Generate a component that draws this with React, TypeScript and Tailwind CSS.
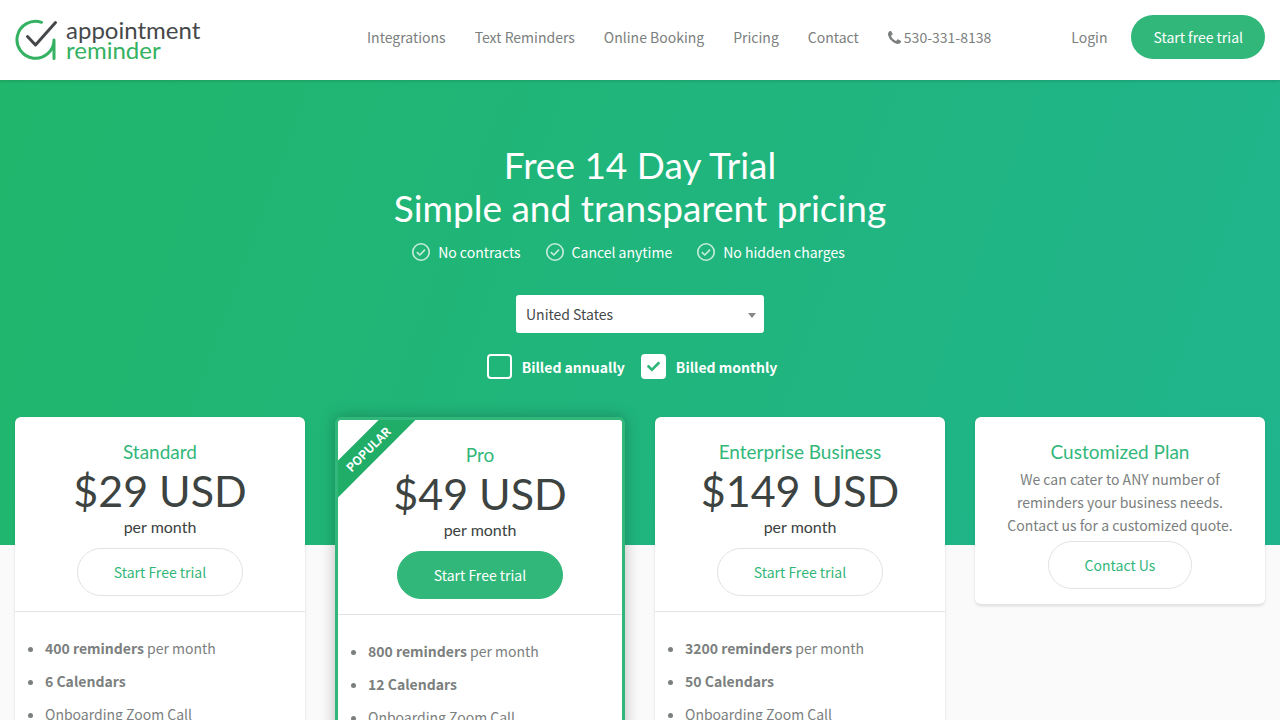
import { FaCheck } from 'react-icons/fa'

const navLinks = ['Integrations', 'Text Reminders', 'Online Booking', 'Pricing', 'Contact']
const benefits = ['No contracts', 'Cancel anytime', 'No hidden charges']

const plans = [
  { name: 'Standard', price: '$29 USD', reminders: '400 reminders', calendars: '6 Calendars', popular: false },
  { name: 'Pro', price: '$49 USD', reminders: '800 reminders', calendars: '12 Calendars', popular: true },
  { name: 'Enterprise Business', price: '$149 USD', reminders: '3200 reminders', calendars: '50 Calendars', popular: false },
]

type Plan = (typeof plans)[number]

function Logo() {
  return (
    <a href="#" className="flex items-center gap-2">
      <svg width="43" height="42" viewBox="0 0 43 42" fill="none" strokeWidth="3" strokeLinecap="round" strokeLinejoin="round">
        <path d="M26.500 3.300A18.500 18.500 0 1 0 39 21v18.500" stroke="#34b262" />
        <path d="M12.500 17.500l8 8.500L40.500 3.500" stroke="#45484a" />
      </svg>
      <span className="flex flex-col font-['Lato',sans-serif] text-2xl leading-5 text-[#45484a]">
        <span>appointment</span>
        <span className="text-[#34b262]">reminder</span>
      </span>
    </a>
  )
}

function PhoneIcon() {
  return (
    <svg width="13" height="13" viewBox="0 0 1408 1408" fill="currentColor">
      <path d="M1408 1112q0 27-10 70.500t-21 68.500q-21 50-122 106-94 51-186 51-27 0-53-3.500t-57.500-12.500-47-14.500-55.500-20.500-49-18q-98-35-175-83-127-79-264-216t-216-264q-48-77-83-175-3-9-18-49t-20.500-55.500-14.500-47-12.500-57.500-3.500-53q0-92 51-186 56-101 106-122 25-11 68.500-21t70.500-10q14 0 21 3 18 6 53 76 11 19 30 54t35 63.500 31 53.500q3 4 17.500 25t21.500 35.500 7 28.500q0 20-28.500 50t-62 55-62 53-28.500 46q0 9 5 22.500t8.500 20.500 14 24 11.500 19q76 137 174 235t235 174q2 1 19 11.500t24 14 20.500 8.500 22.500 5q18 0 46-28.500t53-62 55-62 50-28.500q14 0 28.500 7t35.500 21.500 25 17.500q25 15 53.500 31t63.500 35 54 30q70 35 76 53 3 7 3 21z" />
    </svg>
  )
}

function CheckCircle() {
  return (
    <svg width="20" height="20" viewBox="0 0 20 20" fill="none" stroke="#fff" strokeOpacity="0.75" strokeWidth="1.6">
      <circle cx="10" cy="10" r="8.200" />
      <path d="M5.800 10.200l3 2.800 5.200-5.400" />
    </svg>
  )
}

function BillingBox({ id, label, checked }: { id: string; label: string; checked: boolean }) {
  return (
    <label htmlFor={id} className="mr-4 flex items-center gap-[10px] font-bold">
      <span className="relative flex">
        <input
          id={id}
          type="checkbox"
          defaultChecked={checked}
          className="peer size-[25px] appearance-none rounded border-2 border-white checked:bg-white"
        />
        <FaCheck size={13} className="pointer-events-none absolute inset-0 m-auto hidden text-[#32b77a] peer-checked:block" />
      </span>
      {label}
    </label>
  )
}

function PlanCard({ plan }: { plan: Plan }) {
  return (
    <div
      className={
        plan.popular
          ? 'relative overflow-hidden rounded-md border-[3px] border-[#32b77a] bg-white shadow-[0_0_15px_rgba(0,0,0,0.25)]'
          : 'rounded-md bg-white shadow-[0_1px_3px_rgba(0,0,0,0.12)]'
      }
    >
      {plan.popular && (
        <div className="absolute top-4 -left-8 w-[124px] -rotate-45 bg-[#1fad68] text-center text-xs leading-[26px] font-bold text-white">
          POPULAR
        </div>
      )}
      <div className="flex flex-col items-center border-b border-[#e1e4e3] pt-5 pb-[15px] font-['Lato',sans-serif] text-[#3c4341]">
        <h2 className="text-[19px] leading-[30px] text-[#32b77a]">{plan.name}</h2>
        <p className="text-[43px] leading-12">{plan.price}</p>
        <p className="mb-[9px] text-base leading-6">per month</p>
        <button
          className={
            plan.popular
              ? "h-12 rounded-full border border-[#32b77a] bg-[#32b77a] px-9 font-['Noto_Sans_CJK_SC',sans-serif] text-sm text-white"
              : "h-12 rounded-full border border-[#e1e4e3] px-9 font-['Noto_Sans_CJK_SC',sans-serif] text-sm text-[#32b77a]"
          }
        >
          Start Free trial
        </button>
      </div>
      <ul className="flex list-disc flex-col gap-[10px] pt-[25px] pb-8 pl-[30px] leading-[23px]">
        <li><b>{plan.reminders}</b> per month</li>
        <li><b>{plan.calendars}</b></li>
        <li>Onboarding Zoom Call</li>
      </ul>
    </div>
  )
}

export default function App() {
  return (
    <div className="h-screen overflow-hidden bg-[#fafafa] font-['Noto_Sans_CJK_SC',sans-serif] text-sm text-[#7b807e]">
      <header className="relative flex h-20 items-center justify-between bg-white px-[15px] shadow-[0_1px_3px_rgba(0,0,0,0.15)]">
        <Logo />
        <div className="mb-[6px] flex items-center">
          <nav className="flex items-center gap-[29px]">
            {navLinks.map(link => (
              <a key={link} href="#">{link}</a>
            ))}
            <a href="tel:5303318138" className="flex items-center gap-[3px]">
              <PhoneIcon />
              530-331-8138
            </a>
          </nav>
          <a href="#" className="mr-6 ml-20">Login</a>
          <button className="h-11 rounded-full bg-[#32b77a] px-[22px] text-white">Start free trial</button>
        </div>
      </header>

      <section className="flex flex-col items-center bg-linear-[110deg] from-[#20b66b] to-[#20b48d] px-[15px] pt-[63px] pb-[166px] text-white">
        <h1 className="text-center font-['Lato',sans-serif] text-[37px] leading-[43px]">
          Free 14 Day Trial<br />
          Simple and transparent pricing
        </h1>
        <ul className="mt-3 mb-8 flex">
          {benefits.map(text => (
            <li key={text} className="mr-6 flex items-center gap-[7px] leading-[22px]">
              <CheckCircle />
              {text}
            </li>
          ))}
        </ul>
        <div className="relative w-[248px] text-[#45484a]">
          <select aria-label="Country" className="h-[38px] w-full appearance-none rounded-[3px] bg-white px-[10px]">
            <option>United States</option>
          </select>
          <svg width="8" height="5" viewBox="0 0 8 5" className="pointer-events-none absolute top-[18px] right-2">
            <path d="M0 0h8L4 5z" fill="#888" />
          </svg>
        </div>
        <div className="mt-[21px] flex">
          <BillingBox id="annual" label="Billed annually" checked={false} />
          <BillingBox id="monthly" label="Billed monthly" checked={true} />
        </div>
      </section>

      <main className="relative -mt-32 grid grid-cols-4 items-start gap-[30px] px-[15px]">
        {plans.map(plan => (
          <PlanCard key={plan.name} plan={plan} />
        ))}
        <div className="flex flex-col items-center rounded-md border-b border-[#e1e4e3] bg-white px-6 pt-5 pb-[15px] text-center shadow-[0_1px_3px_rgba(0,0,0,0.12)]">
          <h2 className="font-['Lato',sans-serif] text-[19px] leading-[30px] text-[#32b77a]">Customized Plan</h2>
          <p className="mt-px mb-1 leading-[23px]">
            We can cater to ANY number of reminders your business needs. Contact us for a customized quote.
          </p>
          <button className="h-12 rounded-full border border-[#e1e4e3] px-9 text-[#32b77a]">Contact Us</button>
        </div>
      </main>
    </div>
  )
}
